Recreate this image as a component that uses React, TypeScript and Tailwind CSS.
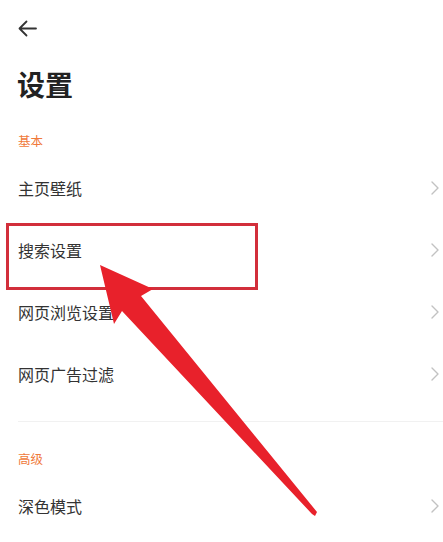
import React from "react";

const font = { fontFamily: '"Noto Sans CJK SC", "Noto Sans", sans-serif' };

function Chevron() {
  return (
    <svg width="8" height="14" viewBox="0 0 8 14" fill="none">
      <path d="M1 1 L7 7 L1 13" stroke="#c2c2c2" strokeWidth="1.4" strokeLinecap="round" strokeLinejoin="round" />
    </svg>
  );
}

function Row({ label }: { label: string }) {
  return (
    <div className="flex h-[62px] items-center justify-between pl-[18px] pr-[4px]">
      <span className="text-[16px] leading-none text-[#333333]">{label}</span>
      <Chevron />
    </div>
  );
}

function SectionHeader({ label }: { label: string }) {
  return (
    <div className="flex h-[32px] items-center pl-[18px]">
      <span className="text-[12.5px] leading-none text-[#f0793a]">{label}</span>
    </div>
  );
}

export default function App() {
  return (
    <div className="relative h-[542px] w-[443px] overflow-hidden bg-white" style={font}>
      <div className="flex h-[56px] items-center pl-[18px]">
        <svg width="19" height="17" viewBox="0 0 19 17" fill="none">
          <path d="M18 8.5 H1.5 M8.5 1.5 L1.5 8.5 L8.5 15.5" stroke="#333333" strokeWidth="1.8" strokeLinecap="round" strokeLinejoin="round" />
        </svg>
      </div>
      <div className="flex h-[40px] items-center pl-[17px] mt-[8px]">
        <span className="text-[28px] font-bold leading-none text-[#222222]">设置</span>
      </div>
      <div className="mt-[21px]">
        <SectionHeader label="基本" />
        <Row label="主页壁纸" />
        <Row label="搜索设置" />
        <Row label="网页浏览设置" />
        <Row label="网页广告过滤" />
      </div>
      <div className="ml-[18px] mt-[16px] h-px bg-[#f1f1f1]" />
      <div className="mt-[21px]">
        <SectionHeader label="高级" />
        <Row label="深色模式" />
      </div>

      <div className="absolute left-[6px] top-[223px] h-[67px] w-[252px] border-[3px] border-[#d22f3b]" />
      <svg className="absolute left-0 top-0" width="443" height="542" viewBox="0 0 443 542">
        <polygon
          points="100,265 153,289 141,296 317,512 315,516 312,514 122,311 114,324"
          fill="#e8212b"
        />
      </svg>
    </div>
  );
}
